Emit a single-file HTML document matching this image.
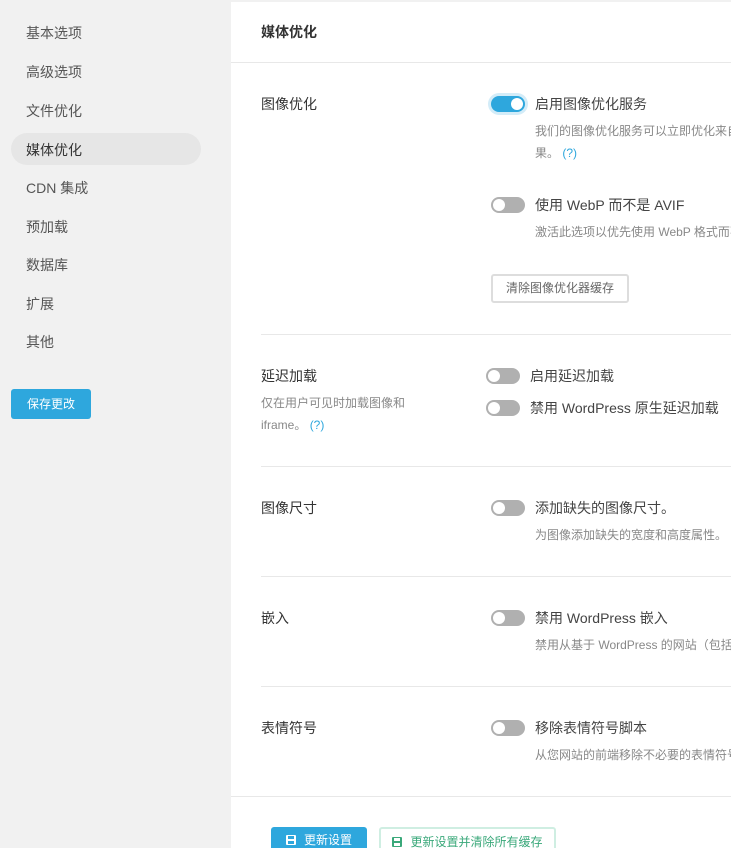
<!DOCTYPE html>
<html><head><meta charset="utf-8"><style>
*{margin:0;padding:0;box-sizing:border-box}
html,body{width:731px;height:848px;overflow:hidden}
body{background:#f1f1f1;font-family:"Liberation Sans","Noto Sans CJK SC",sans-serif;position:relative;color:#444}
#w{position:absolute;left:0;top:0;width:731px;height:848px;overflow:hidden}
.a{position:absolute;white-space:nowrap}
.nav{left:26px;font-size:14px;color:#555}
.act{position:absolute;left:11px;top:133px;width:190px;height:32px;border-radius:16px;background:#e6e6e6}
.save{position:absolute;left:11px;top:389px;width:80px;height:30px;border-radius:3px;background:#2ea7dd;color:#fff;font-size:12px;text-align:center;line-height:30px}
.panel{position:absolute;left:231px;top:2px;width:500px;height:846px;background:#fff}
.hr{position:absolute;left:261px;width:470px;height:1px;background:#e8e8e8}
.lbl{left:261px;font-size:14px;color:#333}
.t{font-size:14px;color:#444}
.d{font-size:12px;color:#888}
.q{color:#2ea7dd}
.tg{position:absolute;width:34px;height:16px;border-radius:8px;background:#b0b0b0}
.tg::after{content:"";position:absolute;left:2px;top:2px;width:12px;height:12px;border-radius:6px;background:#fff}
.tg.on{background:#2ea7dd;box-shadow:0 0 0 3px #d3ecf8}
.tg.on::after{left:20px}
.btn{position:absolute;font-size:12px;border-radius:3px;line-height:26px;text-align:center}
</style></head><body><div id="w">
<div class="act"></div>
<div class="a nav" style="top:23px">基本选项</div>
<div class="a nav" style="top:62px">高级选项</div>
<div class="a nav" style="top:101px">文件优化</div>
<div class="a nav" style="top:140px;color:#333">媒体优化</div>
<div class="a nav" style="top:178px">CDN 集成</div>
<div class="a nav" style="top:217px">预加载</div>
<div class="a nav" style="top:255px">数据库</div>
<div class="a nav" style="top:294px">扩展</div>
<div class="a nav" style="top:332px">其他</div>
<div class="save">保存更改</div>

<div class="panel"></div>
<div class="a" style="left:261px;top:22px;font-size:14px;font-weight:bold;color:#333">媒体优化</div>
<div style="position:absolute;left:231px;top:62px;width:500px;height:1px;background:#e8e8e8"></div>

<div class="a lbl" style="top:94px">图像优化</div>
<div class="tg on" style="left:491px;top:96px"></div>
<div class="a t" style="left:535px;top:94px">启用图像优化服务</div>
<div class="a d" style="left:535px;top:122px">我们的图像优化服务可以立即优化来自您网站的图像</div>
<div class="a d" style="left:535px;top:144px">果。 <span class="q">(?)</span></div>
<div class="tg" style="left:491px;top:197px"></div>
<div class="a t" style="left:535px;top:195px">使用 WebP 而不是 AVIF</div>
<div class="a d" style="left:535px;top:223px">激活此选项以优先使用 WebP 格式而不是 AVIF</div>
<div class="btn" style="left:491px;top:274px;width:138px;height:29px;border:2px solid #ddd;color:#666;line-height:25px">清除图像优化器缓存</div>
<div class="hr" style="top:334px"></div>

<div class="a lbl" style="top:366px">延迟加载</div>
<div class="a d" style="left:261px;top:394px">仅在用户可见时加载图像和</div>
<div class="a d" style="left:261px;top:416px">iframe。 <span class="q">(?)</span></div>
<div class="tg" style="left:486px;top:368px"></div>
<div class="a t" style="left:530px;top:366px">启用延迟加载</div>
<div class="tg" style="left:486px;top:400px"></div>
<div class="a t" style="left:530px;top:398px">禁用 WordPress 原生延迟加载</div>
<div class="hr" style="top:466px"></div>

<div class="a lbl" style="top:498px">图像尺寸</div>
<div class="tg" style="left:491px;top:500px"></div>
<div class="a t" style="left:535px;top:498px">添加缺失的图像尺寸。</div>
<div class="a d" style="left:535px;top:526px">为图像添加缺失的宽度和高度属性。</div>
<div class="hr" style="top:576px"></div>

<div class="a lbl" style="top:608px">嵌入</div>
<div class="tg" style="left:491px;top:610px"></div>
<div class="a t" style="left:535px;top:608px">禁用 WordPress 嵌入</div>
<div class="a d" style="left:535px;top:636px">禁用从基于 WordPress 的网站（包括您自己的网站）</div>
<div class="hr" style="top:686px"></div>

<div class="a lbl" style="top:718px">表情符号</div>
<div class="tg" style="left:491px;top:720px"></div>
<div class="a t" style="left:535px;top:718px">移除表情符号脚本</div>
<div class="a d" style="left:535px;top:746px">从您网站的前端移除不必要的表情符号脚本</div>
<div style="position:absolute;left:231px;top:796px;width:500px;height:1px;background:#e8e8e8"></div>

<div class="btn" style="left:271px;top:827px;width:96px;height:30px;background:#2ea7dd;color:#fff"><svg width="10" height="10" viewBox="0 0 10 10" style="vertical-align:-1px;margin-right:8px"><rect x="0" y="0" width="10" height="10" rx="1" fill="#fff"/><rect x="2" y="1" width="6" height="3" fill="#2ea7dd"/><rect x="2" y="6" width="6" height="3" fill="#2ea7dd"/></svg>更新设置</div>
<div class="btn" style="left:379px;top:827px;width:177px;height:30px;border:2px solid #cfeee2;color:#3aa87a;line-height:26px"><svg width="10" height="10" viewBox="0 0 10 10" style="vertical-align:-1px;margin-right:8px"><rect x="0" y="0" width="10" height="10" rx="1" fill="#3aa87a"/><rect x="2" y="1" width="6" height="3" fill="#fff"/><rect x="2" y="6" width="6" height="3" fill="#fff"/></svg>更新设置并清除所有缓存</div>
</div></body></html>
